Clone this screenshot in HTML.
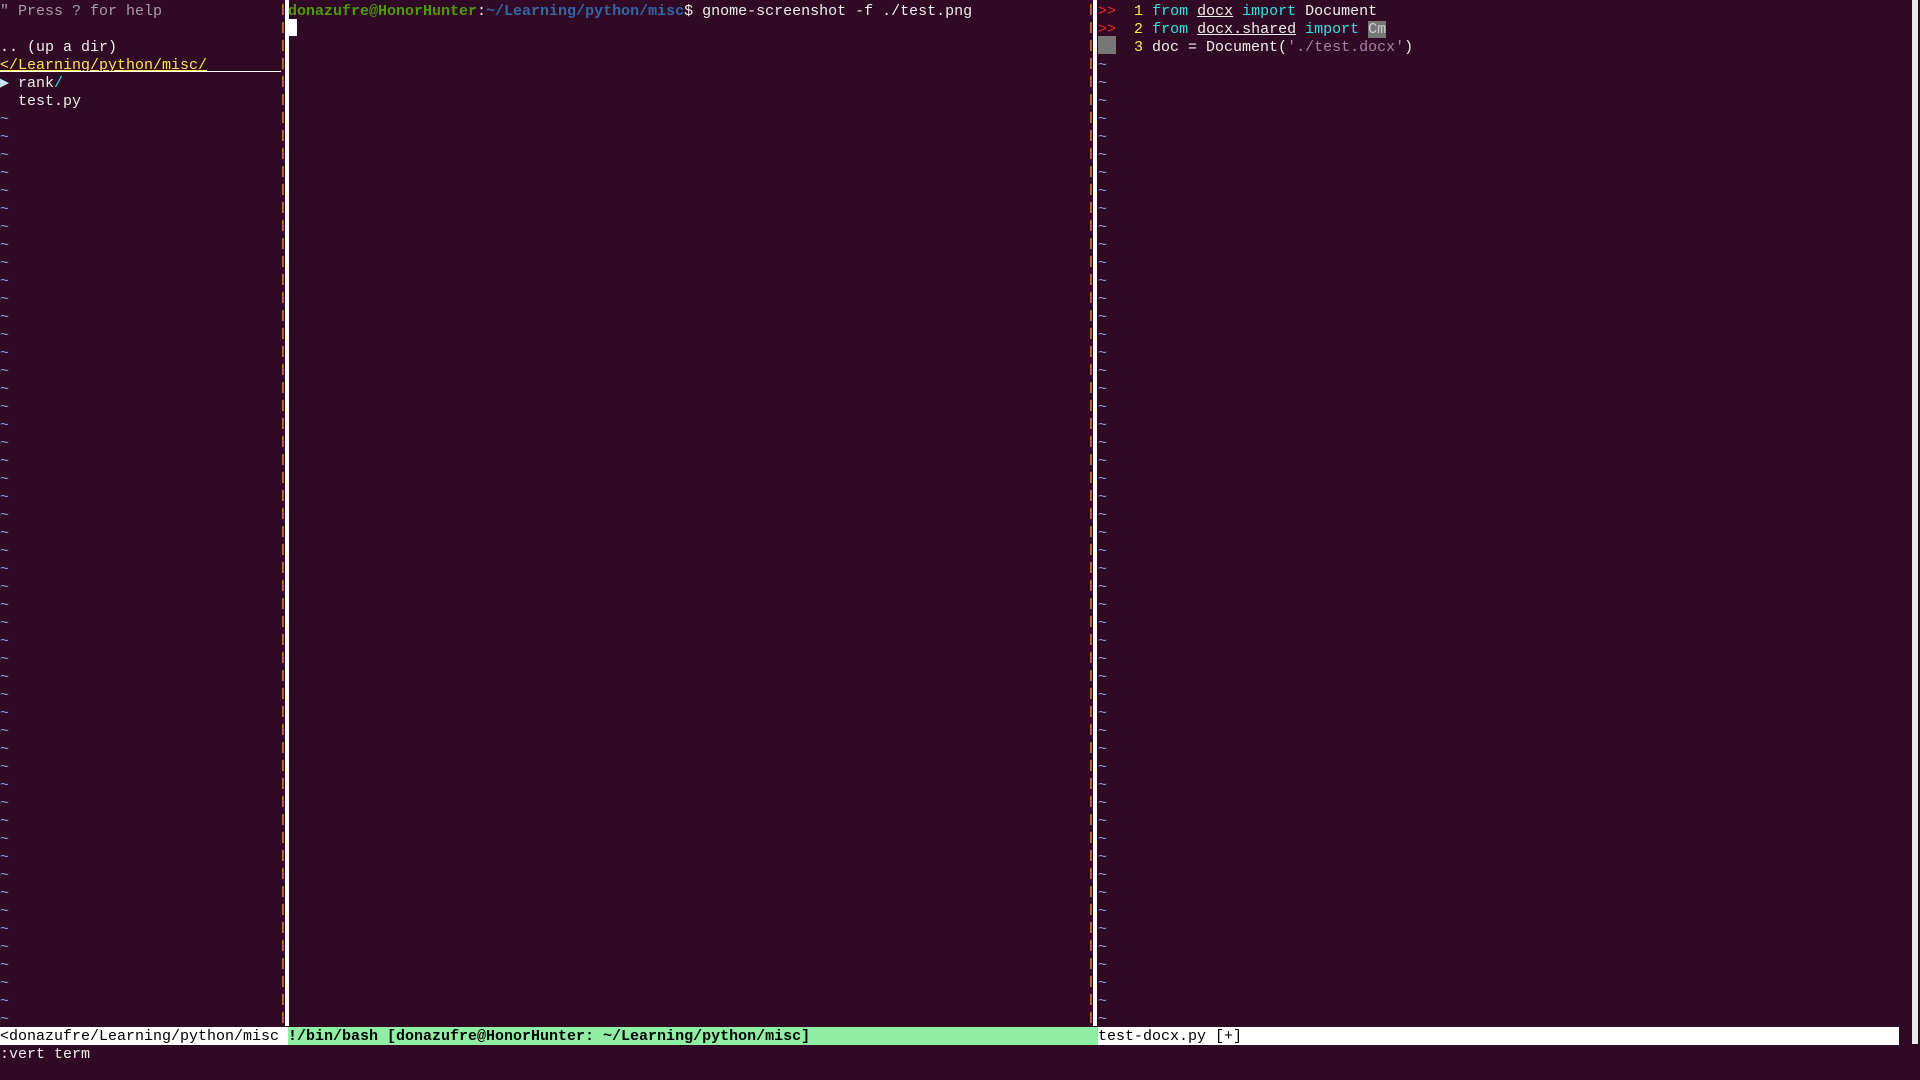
<!DOCTYPE html><html><head><style>
body{margin:0;background:#300a24;width:1920px;height:1080px;overflow:hidden;font:15px/18px "Liberation Mono",monospace;color:#eeeeec}
.r{position:absolute;white-space:pre;height:18px;padding-top:3px;box-sizing:content-box}
.t{color:#8f9fd8}
.sep{position:absolute;top:0;height:1026px;width:4px;background:#fff}
.y{color:#fce94f}.c{color:#34e2e2}.g{color:#4e9a06;font-weight:bold}.b{color:#3465a4;font-weight:bold}
</style></head><body>
<div class="r" style="left:0;top:0;color:#a89aa8">" Press ? for help</div>
<div class="r" style="left:0;top:36px">.. (up a dir)</div>
<div class="r y" style="left:0;top:54px;text-decoration:underline">&lt;/Learning/python/misc/</div>
<div style="position:absolute;left:0;top:71px;width:281px;height:1px;background:#fff"></div>
<div class="r" style="left:0;top:72px"><span style="color:#c8e8f8">▶</span> rank<span class="c">/</span></div>
<div class="r" style="left:0;top:90px">  test.py</div>
<div id="lt"></div>
<div style="position:absolute;top:0;height:1026px;left:282px;width:1px;background:repeating-linear-gradient(transparent 0 4px,#c07030 4px 15px,transparent 15px 18px)"></div>
<div style="position:absolute;top:0;height:1026px;left:283px;width:1px;background:repeating-linear-gradient(transparent 0 4px,#4060e0 4px 15px,transparent 15px 18px)"></div>
<div class="sep" style="left:285px"></div>
<div class="r" style="left:288px;top:0"><span class="g">donazufre@HonorHunter</span>:<span class="b">~/Learning/python/misc</span>$ gnome-screenshot -f ./test.png</div>
<div style="position:absolute;left:288px;top:19px;width:9px;height:17px;background:#fff"></div>
<div style="position:absolute;top:0;height:1026px;left:1090px;width:1px;background:repeating-linear-gradient(transparent 0 4px,#c07030 4px 15px,transparent 15px 18px)"></div>
<div style="position:absolute;top:0;height:1026px;left:1091px;width:1px;background:repeating-linear-gradient(transparent 0 4px,#4060e0 4px 15px,transparent 15px 18px)"></div>
<div class="sep" style="left:1093px"></div>
<div class="r" style="left:1098px;top:0"><span style="color:#ef2929">&gt;&gt;</span>  <span class="y">1</span> <span class="c">from</span> <u>docx</u> <span class="c">import</span> Document</div>
<div class="r" style="left:1098px;top:18px"><span style="color:#ef2929">&gt;&gt;</span>  <span class="y">2</span> <span class="c">from</span> <u>docx.shared</u> <span class="c">import</span> <span style="background:#777;color:#ccc">Cm</span></div>
<div style="position:absolute;left:1098px;top:36px;width:18px;height:18px;background:#777"></div>
<div class="r" style="left:1098px;top:36px">    <span class="y">3</span> doc = Document(<span style="color:#ad7fa8">'./test.docx'</span>)</div>
<div id="rt"></div>
<div style="position:absolute;left:1912px;top:0;width:6px;height:1044px;background:#e8e8e8"></div>
<div style="position:absolute;left:0;top:1027px;width:1899px;height:18px;background:#fff"></div>
<div style="position:absolute;left:288px;top:1027px;width:810px;height:18px;background:#8ff0a4"></div>
<div class="r" style="left:0;top:1025px;color:#000">&lt;donazufre/Learning/python/misc</div>
<div class="r" style="left:288px;top:1025px;color:#000;font-weight:bold">!/bin/bash [donazufre@HonorHunter: ~/Learning/python/misc]</div>
<div class="r" style="left:1098px;top:1025px;color:#000">test-docx.py [+]</div>
<div class="r" style="left:0;top:1043px">:vert term</div>
<script>
var h='';for(var i=6;i<=56;i++)h+='<div class="r t" style="left:0;top:'+i*18+'px">~</div>';document.getElementById('lt').innerHTML=h;
h='';for(var i=3;i<=56;i++)h+='<div class="r t" style="left:1098px;top:'+i*18+'px">~</div>';document.getElementById('rt').innerHTML=h;
</script>
</body></html>
